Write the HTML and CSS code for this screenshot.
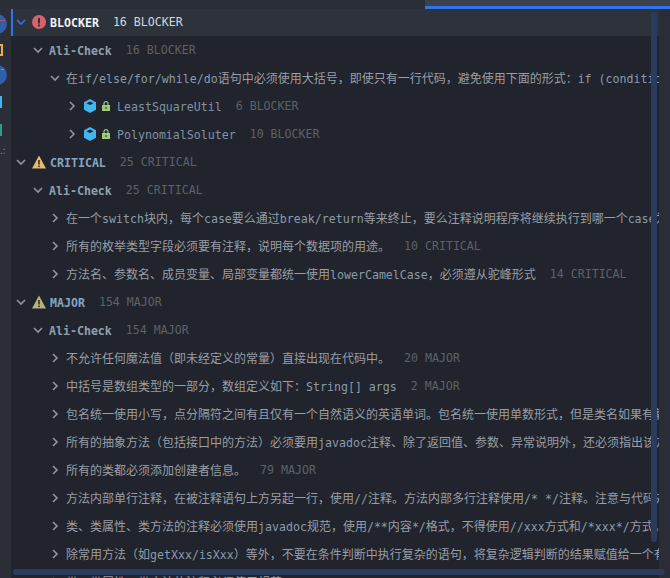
FILE: index.html
```html
<!DOCTYPE html>
<html lang="zh">
<head>
<meta charset="utf-8">
<title>Inspection results</title>
<link rel="stylesheet" href="styles.css">
</head>
<body>
<div class="progress"><div class="progress-fill"></div></div>
<div class="main">
  <aside class="gutter">
    <span class="g-circle g-first"><span class="g-dash"></span></span>
    <span class="g-square"></span>
    <span class="g-circle g-second"><span class="g-dash g-dash-light"></span></span>
    <span class="g-bar g-cyan"></span>
    <span class="g-bar g-teal"></span>
    <span class="g-dots">.:</span>
  </aside>
  <div class="tree-wrap">
    <div class="tree">
      <div class="row selected lv0">
        <svg class="arrow" viewBox="0 0 10 10"><path d="M1 3l4 4 4-4"/></svg>
        <svg class="sev" viewBox="0 0 14 14"><circle cx="7" cy="7" r="7" fill="#d9626a"/><rect x="6" y="3" width="2" height="5.500" fill="#2e323b"/><rect x="6" y="9.500" width="2" height="2" fill="#2e323b"/></svg>
        <span class="t sevname"><span class="l">BLOCKER</span></span><span class="c">16 BLOCKER</span>
      </div>
      <div class="row lv1"><svg class="arrow" viewBox="0 0 10 10"><path d="M1 3l4 4 4-4"/></svg><span class="t"><span class="l b">Ali-Check</span></span><span class="c">16 BLOCKER</span></div>
      <div class="row lv2"><svg class="arrow" viewBox="0 0 10 10"><path d="M1 3l4 4 4-4"/></svg><span class="t">在<span class="l">if/else/for/while/do</span>语句中必须使用大括号，即使只有一行代码，避免使用下面的形式：<span class="l">if (condition) statements;</span></span></div>
      <div class="row lv3"><svg class="arrow" viewBox="0 0 10 10"><path d="M3 1l4 4-4 4"/></svg>
        <svg class="cube" viewBox="0 0 12 14"><path d="M6 0l6 3.200v7.600L6 14l-6-3.200V3.200z" fill="#40b6f2"/><path d="M2.500 4.200L6 2.400l3.500 1.800L6 6z" fill="#20232a"/></svg>
        <svg class="lock" viewBox="0 0 8 10"><path d="M2 4V2.600a2 2 0 0 1 4 0V4" fill="none" stroke="#9ccb7a" stroke-width="1.200"/><rect y="4" width="8" height="6" fill="#9ccb7a"/><rect x="3.500" y="6" width="1" height="2" fill="#20232a"/></svg>
        <span class="t"><span class="l">LeastSquareUtil</span></span><span class="c">6 BLOCKER</span></div>
      <div class="row lv3"><svg class="arrow" viewBox="0 0 10 10"><path d="M3 1l4 4-4 4"/></svg>
        <svg class="cube" viewBox="0 0 12 14"><path d="M6 0l6 3.200v7.600L6 14l-6-3.200V3.200z" fill="#40b6f2"/><path d="M2.500 4.200L6 2.400l3.500 1.800L6 6z" fill="#20232a"/></svg>
        <svg class="lock" viewBox="0 0 8 10"><path d="M2 4V2.600a2 2 0 0 1 4 0V4" fill="none" stroke="#9ccb7a" stroke-width="1.200"/><rect y="4" width="8" height="6" fill="#9ccb7a"/><rect x="3.500" y="6" width="1" height="2" fill="#20232a"/></svg>
        <span class="t"><span class="l">PolynomialSoluter</span></span><span class="c">10 BLOCKER</span></div>

      <div class="row lv0">
        <svg class="arrow" viewBox="0 0 10 10"><path d="M1 3l4 4 4-4"/></svg>
        <svg class="sev" viewBox="0 0 14 14"><path d="M7 .5L14 13.500H0z" fill="#e6b96f"/><rect x="6.200" y="5" width="1.600" height="4.500" fill="#3a3326"/><rect x="6.200" y="10.500" width="1.600" height="1.600" fill="#3a3326"/></svg>
        <span class="t sevname"><span class="l">CRITICAL</span></span><span class="c">25 CRITICAL</span>
      </div>
      <div class="row lv1"><svg class="arrow" viewBox="0 0 10 10"><path d="M1 3l4 4 4-4"/></svg><span class="t"><span class="l b">Ali-Check</span></span><span class="c">25 CRITICAL</span></div>
      <div class="row lv2"><svg class="arrow" viewBox="0 0 10 10"><path d="M3 1l4 4-4 4"/></svg><span class="t">在一个<span class="l">switch</span>块内，每个<span class="l">case</span>要么通过<span class="l">break/return</span>等来终止，要么注释说明程序将继续执行到哪一个<span class="l">case</span>为止</span></div>
      <div class="row lv2"><svg class="arrow" viewBox="0 0 10 10"><path d="M3 1l4 4-4 4"/></svg><span class="t">所有的枚举类型字段必须要有注释，说明每个数据项的用途。</span><span class="c">10 CRITICAL</span></div>
      <div class="row lv2"><svg class="arrow" viewBox="0 0 10 10"><path d="M3 1l4 4-4 4"/></svg><span class="t">方法名、参数名、成员变量、局部变量都统一使用<span class="l">lowerCamelCase</span>，必须遵从驼峰形式</span><span class="c">14 CRITICAL</span></div>

      <div class="row lv0">
        <svg class="arrow" viewBox="0 0 10 10"><path d="M1 3l4 4 4-4"/></svg>
        <svg class="sev" viewBox="0 0 14 14"><path d="M7 .5L14 13.500H0z" fill="#b5b27a"/><rect x="6.200" y="5" width="1.600" height="4.500" fill="#33332a"/><rect x="6.200" y="10.500" width="1.600" height="1.600" fill="#33332a"/></svg>
        <span class="t sevname"><span class="l">MAJOR</span></span><span class="c">154 MAJOR</span>
      </div>
      <div class="row lv1"><svg class="arrow" viewBox="0 0 10 10"><path d="M1 3l4 4 4-4"/></svg><span class="t"><span class="l b">Ali-Check</span></span><span class="c">154 MAJOR</span></div>
      <div class="row lv2"><svg class="arrow" viewBox="0 0 10 10"><path d="M3 1l4 4-4 4"/></svg><span class="t">不允许任何魔法值（即未经定义的常量）直接出现在代码中。</span><span class="c">20 MAJOR</span></div>
      <div class="row lv2"><svg class="arrow" viewBox="0 0 10 10"><path d="M3 1l4 4-4 4"/></svg><span class="t">中括号是数组类型的一部分，数组定义如下：<span class="l">String[] args</span></span><span class="c">2 MAJOR</span></div>
      <div class="row lv2"><svg class="arrow" viewBox="0 0 10 10"><path d="M3 1l4 4-4 4"/></svg><span class="t">包名统一使用小写，点分隔符之间有且仅有一个自然语义的英语单词。包名统一使用单数形式，但是类名如果有复数含义</span></div>
      <div class="row lv2"><svg class="arrow" viewBox="0 0 10 10"><path d="M3 1l4 4-4 4"/></svg><span class="t">所有的抽象方法（包括接口中的方法）必须要用<span class="l">javadoc</span>注释、除了返回值、参数、异常说明外，还必须指出该方法</span></div>
      <div class="row lv2"><svg class="arrow" viewBox="0 0 10 10"><path d="M3 1l4 4-4 4"/></svg><span class="t">所有的类都必须添加创建者信息。</span><span class="c">79 MAJOR</span></div>
      <div class="row lv2"><svg class="arrow" viewBox="0 0 10 10"><path d="M3 1l4 4-4 4"/></svg><span class="t">方法内部单行注释，在被注释语句上方另起一行，使用<span class="l">//</span>注释。方法内部多行注释使用<span class="l">/* */</span>注释。注意与代码对齐</span></div>
      <div class="row lv2"><svg class="arrow" viewBox="0 0 10 10"><path d="M3 1l4 4-4 4"/></svg><span class="t">类、类属性、类方法的注释必须使用<span class="l">javadoc</span>规范，使用<span class="l">/**</span>内容<span class="l">*/</span>格式，不得使用<span class="l">//xxx</span>方式和<span class="l">/*xxx*/</span>方式。</span></div>
      <div class="row lv2"><svg class="arrow" viewBox="0 0 10 10"><path d="M3 1l4 4-4 4"/></svg><span class="t">除常用方法（如<span class="l">getXxx/isXxx</span>）等外，不要在条件判断中执行复杂的语句，将复杂逻辑判断的结果赋值给一个有意义的</span></div>
      <div class="row lv2"><svg class="arrow" viewBox="0 0 10 10"><path d="M3 1l4 4-4 4"/></svg><span class="t">类、类属性、类方法的注释必须使用规范</span></div>
    </div>
    <div class="vscroll"></div>
    <div class="hscroll"></div>
  </div>
</div>
</body>
</html>
```
FILE: styles.css
```css
* { box-sizing: border-box; }
html, body { margin: 0; height: 100%; overflow: hidden; }
body { background: #2b2e36; font: 12px "Noto Sans CJK SC", "DejaVu Sans Mono", sans-serif; color: #9a9ea5; position: relative; }
.progress { position: absolute; top: 0; left: 425px; right: 0; height: 9px; background: #3a404d; z-index: 3; }
.progress-fill { margin-top: 6px; height: 3px; background: #2f74e8; }
.main { display: flex; height: 578px; }
.gutter { width: 11px; flex: none; background: #2b2e36; position: relative; overflow: hidden; }
.g-circle { position: absolute; left: -13px; width: 20px; height: 20px; border-radius: 50%; background: #2f5fa8; }
.g-dash { position: absolute; right: 2px; top: 6px; width: 6px; height: 1px; background: #b0566a; }
.g-dash-light { background: #6f93cc; top: 4px; right: 3px; width: 3px; }
.g-first { top: 14px; }
.g-second { top: 65px; }
.g-square { position: absolute; left: -4px; top: 44px; width: 7px; height: 12px; border: 2px solid #e8ae4c; }
.g-bar { position: absolute; left: -1px; width: 3px; height: 12px; }
.g-cyan { top: 96px; background: #3fb4ee; }
.g-teal { top: 124px; background: #2e9c8e; }
.g-dots { position: absolute; left: 0; top: 142px; color: #7d828a; font-size: 10px; }
.tree-wrap { flex: 1; position: relative; background: #2a2d35; overflow: hidden; }
.tree { width: 648px; padding-top: 9px; overflow: hidden; height: 578px; background: #2b2e36; }
.row { height: 28px; display: flex; align-items: center; white-space: nowrap; background: #21242c; }
.selected { height: 27px; padding-bottom: 1px; background: #2e323b; box-shadow: inset 2px 0 #2f74e8; }
.arrow { width: 10px; height: 10px; flex: none; fill: none; stroke: #90949c; stroke-width: 1.600; }
.selected .arrow { stroke: #2f74e8; }
.lv0 { padding-left: 5px; }
.lv0 .arrow { margin-right: 6px; }
.lv1 { padding-left: 22px; }
.lv1 .arrow { margin-right: 6px; }
.lv2 { padding-left: 39px; }
.lv2 .arrow { margin-right: 6px; }
.lv3 { padding-left: 56px; }
.lv3 .arrow { margin-right: 7px; }
.sev { width: 14px; height: 14px; flex: none; margin-right: 4px; }
.cube { width: 12px; height: 14px; flex: none; margin-right: 6px; }
.lock { width: 8px; height: 10px; flex: none; margin-right: 7px; }
.t { flex: none; margin-bottom: 2px; }
.l { font-family: "DejaVu Sans Mono", monospace; font-size: 11.6px; color: #8a9bab; }
.lv3 .l { color: #8093a5; }
.b { font-weight: 700; color: #8fa0ad; }
.sevname .l { font-weight: 700; color: #86a6c4; }
.selected .sevname .l { color: #f2f4f7; }
.c { font-family: "DejaVu Sans Mono", monospace; font-size: 11.6px; color: #5d6168; margin-left: 14px; flex: none; }
.selected .c { color: #d3d7dc; }
.vscroll { position: absolute; left: 640px; top: 12px; width: 6px; height: 530px; border-radius: 3px; background: #2a3b5c; }
.hscroll { position: absolute; left: 2px; right: 5px; top: 569px; height: 6px; border-radius: 3px; background: #2a3b5c; }
```
